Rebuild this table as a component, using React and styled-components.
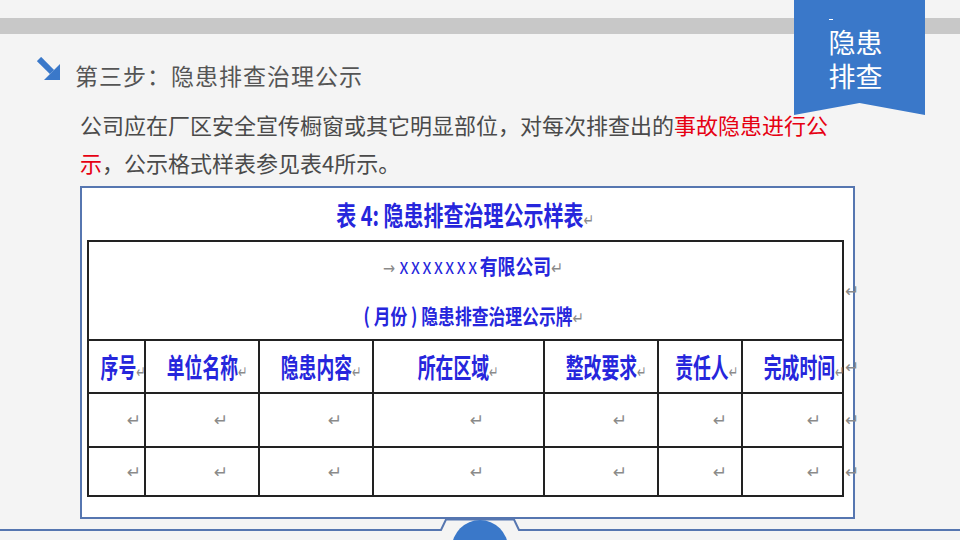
import React from "react";
import styled, { createGlobalStyle } from "styled-components";

const GlobalStyle = createGlobalStyle`
  html, body {
    margin: 0;
    padding: 0;
    background: #f4f4f4;
  }
`;

const Page = styled.div`
  position: relative;
  width: 960px;
  height: 540px;
  overflow: hidden;
  background: #f4f4f4;
  font-family: "Noto Sans CJK SC", "Noto Sans", sans-serif;
`;

const TopBar = styled.div`
  margin-top: 18px;
  height: 16px;
  background: #c8c8c8;
`;

const Ribbon = styled.div`
  position: absolute;
  top: 0;
  right: 35px;
  width: 131px;
  height: 115px;
  background: #3a78c9;
  clip-path: polygon(0 0, 100% 0, 100% 100%, 50% 89.5%, 0 100%);
  display: flex;
  flex-direction: column;
  align-items: center;
  gap: 1px;
  padding: 25px 8px 0 0;
  box-sizing: border-box;
  color: #fff;
  font-size: 27px;
  line-height: 33px;
`;

const RibbonDash = styled.span`
  position: absolute;
  top: 19px;
  left: 35px;
  width: 4px;
  height: 1px;
  background: #fff;
`;

const HeaderRow = styled.div`
  display: flex;
  align-items: flex-start;
  gap: 14px;
  margin-top: 23px;
  padding-left: 37px;
  height: 28px;
`;

const HeaderTitle = styled.h1`
  margin: 0;
  font-size: 23px;
  font-weight: 400;
  line-height: 28px;
  padding-top: 4px;
  letter-spacing: 1px;
  color: #555;
`;

const Paragraph = styled.p`
  margin: 20px 0 0 80px;
  width: 760px;
  font-size: 22px;
  line-height: 38px;
  color: #4a4a4a;
`;

const Red = styled.span`
  color: #e60012;
`;

const Figure = styled.div`
  margin: 5px 0 0 80px;
  width: 775px;
  height: 333px;
  box-sizing: border-box;
  border: 2px solid #5676b0;
  background: #fff;
  display: flex;
  flex-direction: column;
  padding-left: 5px;
`;

const FigureTitle = styled.div`
  height: 52px;
  display: flex;
  align-items: center;
  justify-content: center;
  padding-right: 10px;
`;

const Squeeze = styled.span`
  display: inline-block;
  white-space: nowrap;
  font-weight: 700;
  color: #2626dc;
  font-size: ${(p) => p.$size}px;
  transform: scaleX(${(p) => p.$scale});
  transform-origin: center;
`;

const Mark = styled.span`
  font-family: "DejaVu Sans", sans-serif;
  font-size: 17px;
  font-weight: 400;
  color: #8a8a8a;
`;

const Table = styled.table`
  border-collapse: collapse;
  table-layout: fixed;
  width: 768px;
`;

const Cell = styled.td`
  border: 2px solid #222;
  height: ${(p) => p.$h}px;
  padding: 0 ${(p) => p.$pr || 0}px 0 0;
  text-align: ${(p) => p.$align || "center"};
  vertical-align: middle;
  white-space: nowrap;
  line-height: 1;
`;

const EdgeCell = styled.td`
  border: none;
  padding: 0 0 0 1px;
  vertical-align: middle;
  line-height: 1;
`;

const MergedInner = styled.div`
  display: flex;
  flex-direction: column;
  align-items: center;
  gap: 28px;
  padding-left: 16px;
`;

const Footer = styled.svg`
  position: absolute;
  left: 0;
  bottom: 0;
`;

const cols = [57, 114, 114, 171, 114, 84, 101];
const heads = ["序号", "单位名称", "隐患内容", "所在区域", "整改要求", "责任人", "完成时间"];
const emptyPad = [3, 30, 30, 59, 30, 14, 21];
const rowHeights = [52, 47];

const ArrowIcon = () => (
  <svg width="24" height="24" viewBox="0 0 24 24">
    <line x1="2" y1="2" x2="15" y2="15" stroke="#3a78c9" strokeWidth="6" />
    <polygon points="23,7 23,23 7,23" fill="#3a78c9" />
  </svg>
);

export default function App() {
  return (
    <Page>
      <GlobalStyle />
      <TopBar />
      <Ribbon>
        <RibbonDash />
        <span>隐患</span>
        <span>排查</span>
      </Ribbon>
      <HeaderRow>
        <ArrowIcon />
        <HeaderTitle>第三步：隐患排查治理公示</HeaderTitle>
      </HeaderRow>
      <Paragraph>
        公司应在厂区安全宣传橱窗或其它明显部位，对每次排查出的
        <Red>事故隐患进行公</Red>
        <Red>示</Red>，公示格式样表参见表4所示。
      </Paragraph>
      <Figure>
        <FigureTitle>
          <Squeeze $size={27} $scale={0.74}>
            表 4: 隐患排查治理公示样表<Mark>↵</Mark>
          </Squeeze>
        </FigureTitle>
        <Table>
          <colgroup>
            {cols.map((w, i) => (
              <col key={i} style={{ width: w }} />
            ))}
            <col style={{ width: 12 }} />
          </colgroup>
          <tbody>
            <tr>
              <Cell colSpan={7} $h={97}>
                <MergedInner>
                  <Squeeze $size={21} $scale={0.85}>
                    <Mark>→ </Mark>
                    <span style={{ fontWeight: 400, letterSpacing: 3 }}>xxxxxxx</span>有限公司<Mark>↵</Mark>
                  </Squeeze>
                  <Squeeze $size={21} $scale={0.8}>
                    ( 月份 ) 隐患排查治理公示牌<Mark>↵</Mark>
                  </Squeeze>
                </MergedInner>
              </Cell>
              <EdgeCell>
                <Mark>↵</Mark>
              </EdgeCell>
            </tr>
            <tr>
              {heads.map((h) => (
                <Cell key={h} $h={51}>
                  <Squeeze $size={27} $scale={0.66}>
                    {h}
                    <Mark>↵</Mark>
                  </Squeeze>
                </Cell>
              ))}
              <EdgeCell>
                <Mark>↵</Mark>
              </EdgeCell>
            </tr>
            {rowHeights.map((h, r) => (
              <tr key={r}>
                {emptyPad.map((p, i) => (
                  <Cell key={i} $h={h} $align="right" $pr={p}>
                    <Mark>↵</Mark>
                  </Cell>
                ))}
                <EdgeCell>
                  <Mark>↵</Mark>
                </EdgeCell>
              </tr>
            ))}
          </tbody>
        </Table>
      </Figure>
      <Footer width="960" height="24" viewBox="0 0 960 24">
        <path
          d="M0 14 H441 L446 3.5 H514 L519 14 H960"
          fill="none"
          stroke="#5676b0"
          strokeWidth="2"
        />
        <circle cx="480" cy="32" r="28" fill="#3a78c9" />
      </Footer>
    </Page>
  );
}
